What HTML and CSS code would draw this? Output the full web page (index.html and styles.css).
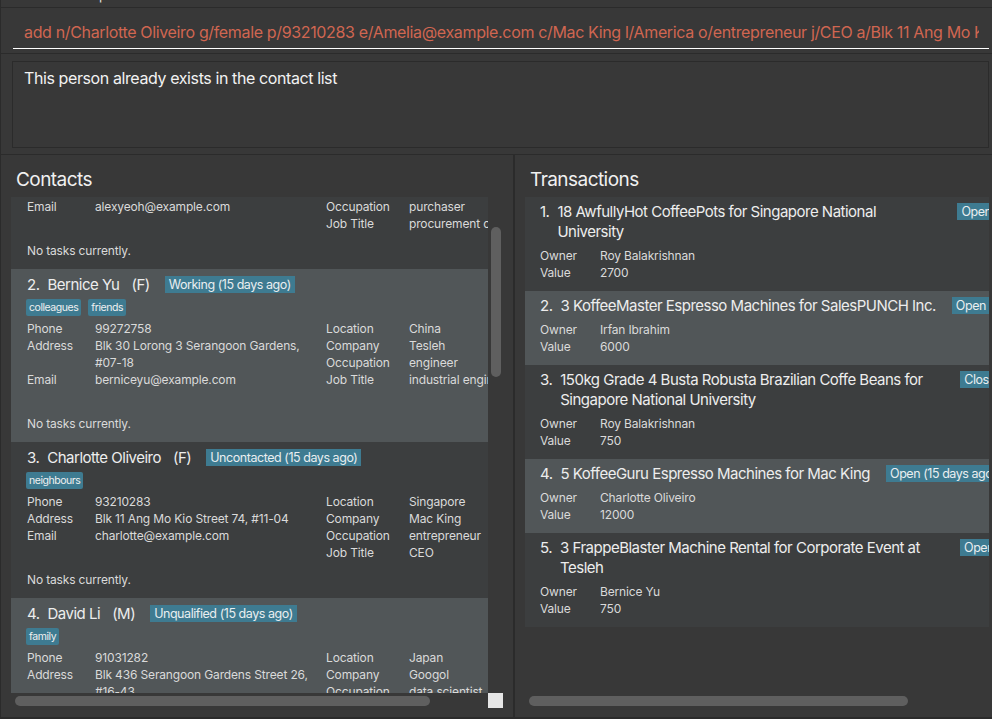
FILE: index.html
```html
<!DOCTYPE html>
<html lang="en">
<head>
<meta charset="utf-8">
<title>Address Book</title>
<link rel="stylesheet" href="styles.css">
</head>
<body>
<div class="app">
  <div class="menubar"><span class="menu-item">File</span><span class="menu-item">Help</span></div>
  <div class="command-box">
    <div class="command-field"><span class="command-text">add n/Charlotte Oliveiro g/female p/93210283 e/Amelia@example.com c/Mac King l/America o/entrepreneur j/CEO a/Blk 11 Ang Mo Kio Street 74, #11-04</span></div>
  </div>
  <div class="result-area">
    <div class="result-box">This person already exists in the contact list</div>
  </div>
  <div class="panels">
    <section class="panel contacts-panel">
      <h2 class="panel-title">Contacts</h2>
      <div class="listview contacts-list">
        <div class="viewport">
          <div class="list scrolled">
            <div class="card even">
              <div class="name-row"><span class="idx">1.</span><span class="name">Alex Yeoh</span><span class="gender">(M)</span><span class="status">Qualified (15 days ago)</span></div>
              <div class="tags"><span class="tag">friends</span></div>
              <div class="details">
                <div class="fields left"><span>Phone</span><span>87438807</span><span>Address</span><span>Blk 30 Geylang Street 29, #06-40</span><span>Email</span><span>alexyeoh@example.com</span></div>
                <div class="fields right"><span>Location</span><span>Singapore</span><span>Company</span><span>Kopi Co</span><span>Occupation</span><span>purchaser</span><span>Job Title</span><span>procurement officer</span></div>
              </div>
              <div class="tasks">No tasks currently.</div>
            </div>
            <div class="card odd">
              <div class="name-row"><span class="idx">2.</span><span class="name">Bernice Yu</span><span class="gender">(F)</span><span class="status">Working (15 days ago)</span></div>
              <div class="tags"><span class="tag">colleagues</span><span class="tag">friends</span></div>
              <div class="details wrapfix">
                <div class="fields left"><span>Phone</span><span>99272758</span><span>Address</span><span>Blk 30 Lorong 3 Serangoon Gardens, #07-18</span><span>Email</span><span>berniceyu@example.com</span></div>
                <div class="fields right"><span>Location</span><span>China</span><span>Company</span><span>Tesleh</span><span>Occupation</span><span>engineer</span><span>Job Title</span><span>industrial engineer</span></div>
              </div>
              <div class="tasks">No tasks currently.</div>
            </div>
            <div class="card even">
              <div class="name-row"><span class="idx">3.</span><span class="name">Charlotte Oliveiro</span><span class="gender">(F)</span><span class="status">Uncontacted (15 days ago)</span></div>
              <div class="tags"><span class="tag">neighbours</span></div>
              <div class="details">
                <div class="fields left"><span>Phone</span><span>93210283</span><span>Address</span><span>Blk 11 Ang Mo Kio Street 74, #11-04</span><span>Email</span><span>charlotte@example.com</span></div>
                <div class="fields right"><span>Location</span><span>Singapore</span><span>Company</span><span>Mac King</span><span>Occupation</span><span>entrepreneur</span><span>Job Title</span><span>CEO</span></div>
              </div>
              <div class="tasks">No tasks currently.</div>
            </div>
            <div class="card odd">
              <div class="name-row"><span class="idx">4.</span><span class="name">David Li</span><span class="gender">(M)</span><span class="status">Unqualified (15 days ago)</span></div>
              <div class="tags"><span class="tag">family</span></div>
              <div class="details wrapfix">
                <div class="fields left"><span>Phone</span><span>91031282</span><span>Address</span><span>Blk 436 Serangoon Gardens Street 26, #16-43</span><span>Email</span><span>lidavid@example.com</span></div>
                <div class="fields right"><span>Location</span><span>Japan</span><span>Company</span><span>Googol</span><span>Occupation</span><span>data scientist</span><span>Job Title</span><span>analyst</span></div>
              </div>
              <div class="tasks">No tasks currently.</div>
            </div>
          </div>
        </div>
        <div class="vbar"><div class="vthumb"></div></div>
        <div class="hbar"><div class="hthumb contacts-thumb"></div></div>
        <div class="corner"></div>
      </div>
    </section>
    <div class="divider"></div>
    <section class="panel tx-panel">
      <h2 class="panel-title">Transactions</h2>
      <div class="listview tx-list">
        <div class="viewport">
          <div class="list">
            <div class="tx-card even">
              <div class="tx-title-row"><span class="idx">1.</span><span class="tx-title">18 AwfullyHot CoffeePots for Singapore National University</span><span class="status">Open (15 days ago)</span></div>
              <div class="tx-fields"><span>Owner</span><span>Roy Balakrishnan</span><span>Value</span><span>2700</span></div>
            </div>
            <div class="tx-card odd">
              <div class="tx-title-row"><span class="idx">2.</span><span class="tx-title">3 KoffeeMaster Espresso Machines for SalesPUNCH Inc.</span><span class="status">Open (15 days ago)</span></div>
              <div class="tx-fields"><span>Owner</span><span>Irfan Ibrahim</span><span>Value</span><span>6000</span></div>
            </div>
            <div class="tx-card even">
              <div class="tx-title-row"><span class="idx">3.</span><span class="tx-title">150kg Grade 4 Busta Robusta Brazilian Coffe Beans for Singapore National University</span><span class="status">Closed (15 days ago)</span></div>
              <div class="tx-fields"><span>Owner</span><span>Roy Balakrishnan</span><span>Value</span><span>750</span></div>
            </div>
            <div class="tx-card odd">
              <div class="tx-title-row"><span class="idx">4.</span><span class="tx-title">5 KoffeeGuru Espresso Machines for Mac King</span><span class="status">Open (15 days ago)</span></div>
              <div class="tx-fields"><span>Owner</span><span>Charlotte Oliveiro</span><span>Value</span><span>12000</span></div>
            </div>
            <div class="tx-card even">
              <div class="tx-title-row"><span class="idx">5.</span><span class="tx-title">3 FrappeBlaster Machine Rental for Corporate Event at Tesleh</span><span class="status">Open (15 days ago)</span></div>
              <div class="tx-fields"><span>Owner</span><span>Bernice Yu</span><span>Value</span><span>750</span></div>
            </div>
          </div>
        </div>
        <div class="vbar"></div>
        <div class="hbar"><div class="hthumb tx-thumb"></div></div>
        <div class="corner"></div>
      </div>
    </section>
  </div>
</div>
</body>
</html>
```

FILE: styles.css
```css
html, body {
  margin: 0;
  padding: 0;
}

body {
  background: #383838;
  font-family: Inter, "Noto Sans", sans-serif;
  width: 992px;
  height: 719px;
  overflow: hidden;
}

.app {
  height: 719px;
  box-sizing: border-box;
  border-left: 1px solid #2b2b2b;
  display: flex;
  flex-direction: column;
}

/* menu bar (scrolled mostly out of view) */
.menubar {
  height: 8px;
  box-sizing: border-box;
  border-bottom: 1px solid #2b2b2b;
  overflow: hidden;
  display: flex;
  align-items: flex-end;
  gap: 12px;
  padding-left: 44px;
  flex: none;
}

.menu-item {
  font-size: 13px;
  line-height: 13px;
  color: #e0e0e0;
  margin-bottom: 5px;
}

/* command box */
.command-box {
  height: 46px;
  box-sizing: border-box;
  padding: 8px 3px 0 12px;
  border-bottom: 1px solid #2b2b2b;
  flex: none;
}

.command-field {
  height: 33px;
  box-sizing: border-box;
  border-bottom: 1px solid #ffffff;
  padding: 0 10px 0 11px;
  display: flex;
  align-items: center;
  font-size: 16px;
  letter-spacing: -0.35px;
  color: #d06651;
}

.command-text {
  flex: 1;
  min-width: 0;
  overflow: hidden;
  white-space: nowrap;
}

/* result display */
.result-area {
  height: 101px;
  box-sizing: border-box;
  padding: 7px 3px 0 11px;
  border-bottom: 1px solid #2b2b2b;
  flex: none;
}

.result-box {
  height: 87px;
  box-sizing: border-box;
  border: 1px solid #2b2b2b;
  padding: 5px 11px;
  font-size: 16px;
  line-height: 22px;
  letter-spacing: -0.4px;
  color: #f2f2f2;
}

/* panels */
.panels {
  flex: 1;
  min-height: 0;
  display: flex;
  border-bottom: 2px solid #2b2b2b;
}

.panel {
  overflow: hidden;
  box-sizing: border-box;
  padding: 13px 0 0 10px;
  display: flex;
  flex-direction: column;
}

.contacts-panel {
  width: 512px;
  flex: none;
}

.divider {
  width: 2px;
  background: #2b2b2b;
  flex: none;
}

.tx-panel {
  flex: 1;
  min-width: 0;
}

.panel-title {
  margin: 0 0 5px 5px;
  height: 24px;
  font-size: 19px;
  line-height: 24px;
  font-weight: 400;
  letter-spacing: -0.55px;
  color: #f0f0f0;
}

/* list views with scrollbars */
.listview {
  display: grid;
  grid-template-rows: 496px 15px;
}

.contacts-list {
  grid-template-columns: 477px 15px;
}

.tx-list {
  grid-template-columns: 464px 15px;
}

.viewport {
  overflow: hidden;
}

.list.scrolled {
  margin-top: -84px;
}

.vthumb {
  margin: 30px 0 0 3px;
  width: 10px;
  height: 150px;
  border-radius: 5px;
  background: #5f5f5f;
}

.hthumb {
  margin: 3px 0 0 4px;
  height: 10px;
  border-radius: 5px;
  background: #5f5f5f;
}

.contacts-thumb {
  width: 415px;
}

.tx-thumb {
  width: 379px;
}

.corner {
  background: #e6e6e6;
}

.tx-list .corner {
  background: transparent;
}

/* contact cards */
.even {
  background: #3c3e3f;
}

.odd {
  background: #515658;
}

.card {
  padding: 5px 0 10px 16px;
  overflow: hidden;
}

.name-row {
  display: flex;
  align-items: center;
  height: 20px;
  margin-bottom: 5px;
  white-space: nowrap;
  font-size: 15px;
  letter-spacing: -0.5px;
  color: #ededed;
}

.idx {
  margin-right: 8px;
}

.gender {
  margin-left: 12px;
}

.status {
  font-size: 12.5px;
  line-height: 17px;
  letter-spacing: -0.45px;
  padding: 0 4px;
  background: #3e7b91;
  color: #e9eef0;
  white-space: nowrap;
}

.name-row .status {
  margin-left: 15px;
}

.tags {
  display: flex;
  gap: 7px;
  height: 17px;
  margin: 0 0 4px -1px;
}

.tag {
  font-size: 10.5px;
  line-height: 15px;
  letter-spacing: -0.45px;
  padding: 1px 3px;
  border-radius: 2px;
  background: #3e7b91;
  color: #f0f0f0;
}

.details {
  display: flex;
  font-size: 12px;
  line-height: 17px;
  letter-spacing: -0.15px;
  color: #dadada;
  margin-bottom: 10px;
}

.details.wrapfix {
  margin-bottom: 27px;
}

.fields {
  display: grid;
  align-content: start;
}

.fields.left {
  grid-template-columns: 68px 220px;
  width: 299px;
  flex: none;
}

.fields.right {
  grid-template-columns: 83px max-content;
  white-space: nowrap;
  flex: none;
}

.tasks {
  font-size: 12px;
  line-height: 17px;
  letter-spacing: -0.15px;
  color: #dadada;
}

/* transaction cards */
.tx-card {
  padding: 5px 0 10px 15px;
  overflow: hidden;
}

.tx-title-row {
  display: flex;
  align-items: flex-start;
  width: max-content;
  font-size: 15px;
  line-height: 20px;
  letter-spacing: -0.5px;
  color: #ededed;
  margin-bottom: 5px;
}

.tx-title-row .idx {
  margin-right: 8px;
  flex: none;
}

.tx-title {
  max-width: 384px;
}

.tx-title-row .status {
  margin: 1px 0 0 16px;
  flex: none;
}

.tx-fields {
  display: grid;
  grid-template-columns: 60px max-content;
  font-size: 12px;
  line-height: 17px;
  letter-spacing: -0.15px;
  color: #dadada;
}
```
